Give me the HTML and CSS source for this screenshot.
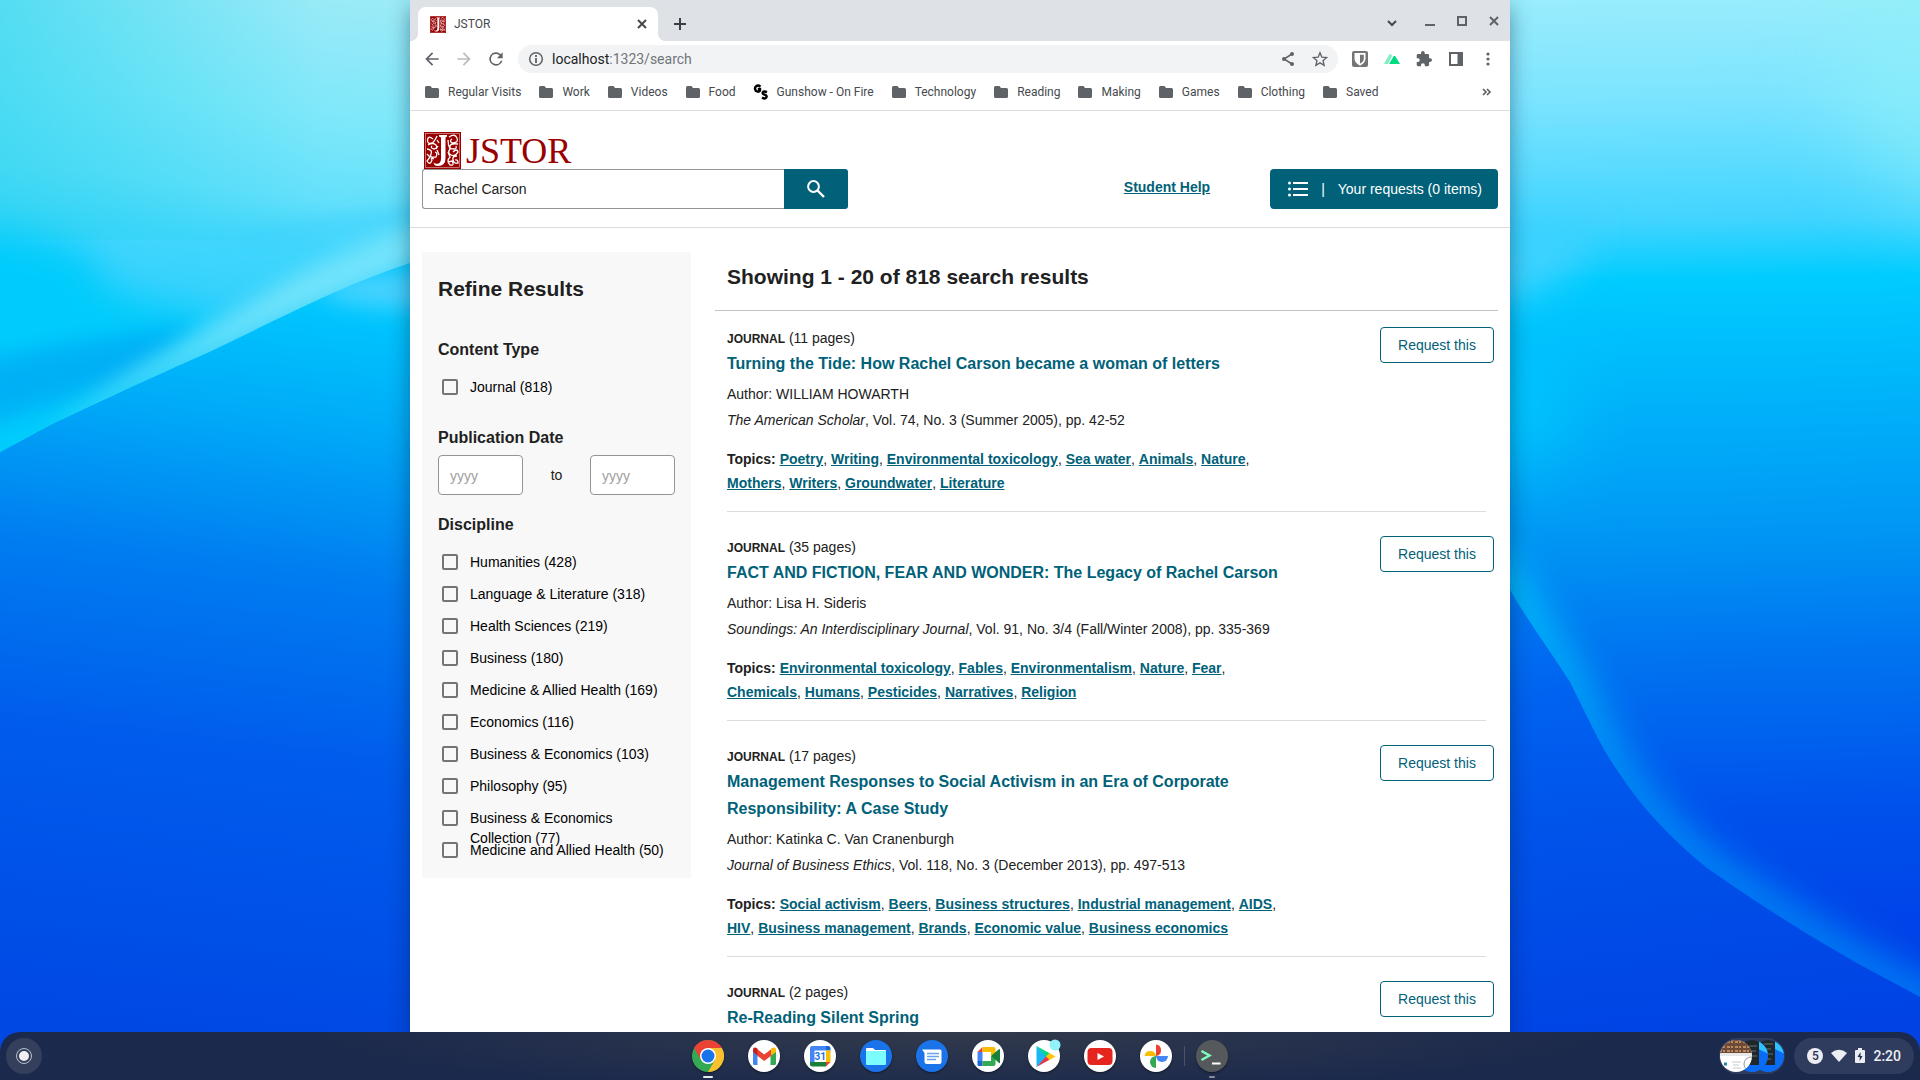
FILE: index.html
```html
<!DOCTYPE html>
<html lang="en">
<head>
<meta charset="utf-8">
<title>JSTOR</title>
<link rel="stylesheet" href="styles.css">
</head>
<body>
<svg class="wallpaper" viewBox="0 0 1920 1080" preserveAspectRatio="none" aria-hidden="true">
  <defs>
    <linearGradient id="skyL" gradientUnits="userSpaceOnUse" x1="330" y1="0" x2="290" y2="330"><stop offset="0" stop-color="#9aeaf7"/><stop offset=".35" stop-color="#7ee8fa"/><stop offset=".6" stop-color="#64e0fb"/><stop offset=".75" stop-color="#42d6fd"/><stop offset="1" stop-color="#30d0fc"/></linearGradient>
    <linearGradient id="leftTint" gradientUnits="userSpaceOnUse" x1="0" y1="0" x2="320" y2="0"><stop offset="0" stop-color="#2cd4ee" stop-opacity=".6"/><stop offset="1" stop-color="#2cd4ee" stop-opacity="0"/></linearGradient>
    <linearGradient id="deepL" gradientUnits="userSpaceOnUse" x1="330" y1="290" x2="240" y2="1040"><stop offset="0" stop-color="#00caff"/><stop offset=".17" stop-color="#00acf8"/><stop offset=".38" stop-color="#007cf0"/><stop offset=".62" stop-color="#005cec"/><stop offset="1" stop-color="#0048e4"/></linearGradient>
    <linearGradient id="skyR" gradientUnits="userSpaceOnUse" x1="1700" y1="0" x2="1720" y2="960"><stop offset="0" stop-color="#98ecfb"/><stop offset=".1" stop-color="#7ce4ff"/><stop offset=".23" stop-color="#40d4ff"/><stop offset=".29" stop-color="#00ccff"/><stop offset=".4" stop-color="#00b6fb"/><stop offset=".55" stop-color="#0098f4"/><stop offset=".68" stop-color="#0074f0"/><stop offset=".85" stop-color="#0050ec"/><stop offset="1" stop-color="#0040e8"/></linearGradient>
    <linearGradient id="deepR" gradientUnits="userSpaceOnUse" x1="1510" y1="580" x2="1560" y2="1060"><stop offset="0" stop-color="#007cf2"/><stop offset=".25" stop-color="#0062f0"/><stop offset=".5" stop-color="#0054ea"/><stop offset="1" stop-color="#0042e4"/></linearGradient>
    <linearGradient id="glow" gradientUnits="userSpaceOnUse" x1="1510" y1="560" x2="1920" y2="1000"><stop offset="0" stop-color="#00c8fc"/><stop offset=".4" stop-color="#0094f6"/><stop offset="1" stop-color="#0080f6"/></linearGradient>
    <filter id="b10" x="-20%" y="-60%" width="140%" height="220%"><feGaussianBlur stdDeviation="11"/></filter>
    <filter id="b16" x="-30%" y="-60%" width="160%" height="220%"><feGaussianBlur stdDeviation="18"/></filter>
    <filter id="b40" x="-60%" y="-60%" width="220%" height="220%"><feGaussianBlur stdDeviation="40"/></filter>
    <clipPath id="ridge"><path d="M0 0H960V142L410 263C340 286 283 317 207 353C150 378 90 406 50 425L0 452Z"/></clipPath>
    <clipPath id="hill"><path d="M960 0H1920V997L1853 961C1800 930 1760 905 1707 868C1670 838 1640 806 1617 770C1600 745 1590 722 1570 682C1550 650 1530 624 1510 590L1480 550H960Z"/></clipPath>
  </defs>
  <rect width="960" height="1080" fill="url(#deepL)"/>
  <ellipse cx="420" cy="290" rx="100" ry="18" fill="#48d2ff" filter="url(#b10)"/>
  <g clip-path="url(#ridge)">
    <rect width="960" height="460" fill="url(#skyL)"/>
    <rect width="960" height="240" fill="url(#leftTint)"/>
    <path d="M-80 222Q60 232 95 260Q85 300 220 316L160 400L-80 540Z" fill="#00ccfc" filter="url(#b16)"/>
    <path d="M-60 370Q90 335 200 326L130 380L-60 440Z" fill="#00b0f6" filter="url(#b10)"/>
    <path d="M230 236Q350 222 500 192V214Q360 226 250 246Z" fill="#38d0fc" filter="url(#b10)"/>
    <path d="M40 440L133 387L283 317L410 263L480 240V214Q340 240 240 312L130 374Z" fill="#84e8fa" opacity=".8" filter="url(#b10)"/>
  </g>
  <rect x="960" width="960" height="1080" fill="url(#deepR)"/>
  <g clip-path="url(#hill)">
    <rect x="960" width="960" height="1080" fill="url(#skyR)"/>
    <path d="M1430 220H1600Q1580 300 1430 320Z" fill="#3cd2ff" filter="url(#b16)"/>
    <path d="M1840 -60H2060V230Q1900 220 1840 120Z" fill="#90f0f8" opacity=".6" filter="url(#b40)"/>
    <path d="M1450 350H1560V460H1450Z" fill="#00c8fe" filter="url(#b40)"/>
    <path d="M1480 550L1510 590C1530 624 1550 650 1570 682C1590 722 1600 745 1617 770C1640 806 1670 838 1707 868C1760 905 1800 930 1853 961L1960 1018" fill="none" stroke="url(#glow)" stroke-width="34" filter="url(#b16)"/>
  </g>
</svg>

<div class="desktop">
<div class="window">
  <div class="tabstrip">
    <div class="tab">
      <svg width="16" height="17" viewBox="0 0 37 37" preserveAspectRatio="none"><use href="#emblem"/></svg>
      <span class="tab-title">JSTOR</span>
      <button class="icon" aria-label="Close tab"><svg width="16" height="16" viewBox="0 0 16 16"><path d="M4 4L12 12M12 4L4 12" stroke="#45494d" stroke-width="2"/></svg></button>
    </div>
    <button class="icon newtab" aria-label="New tab"><svg width="16" height="16" viewBox="0 0 16 16"><path d="M8 2V14M2 8H14" stroke="#3c4043" stroke-width="2"/></svg></button>
    <div class="wincontrols">
      <button class="icon" aria-label="Search tabs"><svg width="16" height="16" viewBox="0 0 16 16"><path d="M4 8L8 12L12 8" fill="none" stroke="#45494d" stroke-width="2"/></svg></button>
      <button class="icon" aria-label="Minimize"><svg width="16" height="16" viewBox="0 0 16 16"><path d="M3 12H13" stroke="#5f6368" stroke-width="2"/></svg></button>
      <button class="icon" aria-label="Maximize"><svg width="16" height="16" viewBox="0 0 16 16"><path d="M4 4H12V12H4Z" fill="none" stroke="#5f6368" stroke-width="2"/></svg></button>
      <button class="icon" aria-label="Close"><svg width="16" height="16" viewBox="0 0 16 16"><path d="M4 4L12 12M12 4L4 12" stroke="#5f6368" stroke-width="2"/></svg></button>
    </div>
  </div>

  <div class="toolbar">
    <button class="icon" aria-label="Back"><svg width="20" height="20" viewBox="0 0 24 24"><path d="M20 11H7.800l5.600-5.600L12 4l-8 8 8 8 1.400-1.400L7.800 13H20z" fill="#5f6368"/></svg></button>
    <button class="icon" aria-label="Forward"><svg width="20" height="20" viewBox="0 0 24 24"><path d="M4 11h12.200l-5.600-5.600L12 4l8 8-8 8-1.400-1.400L16.200 13H4z" fill="#babcbe"/></svg></button>
    <button class="icon" aria-label="Reload"><svg width="20" height="20" viewBox="0 0 24 24"><path d="M17.650 6.350A8 8 0 1 0 19.730 14h-2.080A6 6 0 1 1 12 6c1.660 0 3.140.690 4.220 1.780L13 11h7V4z" fill="#5f6368"/></svg></button>
    <div class="omnibox">
      <svg width="16" height="16" viewBox="0 0 16 16"><circle cx="8" cy="8" r="6.300" fill="none" stroke="#5f6368" stroke-width="1.500"/><path d="M8 7V12M8 4V6" stroke="#5f6368" stroke-width="1.800"/></svg>
      <span class="url">localhost<span>:1323/search</span></span>
      <svg width="16" height="16" viewBox="0 0 16 16"><path d="M12 3L4 8L12 13" fill="none" stroke="#5f6368" stroke-width="1.500"/><g fill="#5f6368"><circle cx="12" cy="3" r="2"/><circle cx="4" cy="8" r="2"/><circle cx="12" cy="13" r="2"/></g></svg>
      <svg width="16" height="16" viewBox="0 0 24 24"><path d="M12 2.500l2.800 6.700 7.200.600-5.500 4.700 1.700 7L12 17.800 5.800 21.500l1.700-7L2 9.800l7.200-.600z" fill="none" stroke="#5f6368" stroke-width="2"/></svg>
    </div>
    <div class="extensions">
      <svg width="16" height="16" viewBox="0 0 16 16"><rect width="16" height="16" rx="2" fill="#757575"/><path d="M2.500 2H13.500V8Q13 12 8 14.800Q3 12 2.500 8Z" fill="#fff"/><path d="M8 3.800H11.800V8Q11.800 10.500 8 12.700Z" fill="#757575"/></svg>
      <svg width="16" height="16" viewBox="0 0 16 16"><path d="M0 13L5 4Q6.500 2 7.500 4L8 5L4 13Z" fill="#80eec0"/><path d="M5 13L9.500 5.500Q10.500 4 11.500 5.500L16 13Z" fill="#00dc82"/></svg>
      <svg width="16" height="16" viewBox="1 1 22 22"><path d="M20.500 11H19V7a2 2 0 0 0-2-2h-4V3.500a2.500 2.500 0 0 0-5 0V5H4a2 2 0 0 0-2 2v3.800h1.500a2.700 2.700 0 0 1 0 5.400H2V20a2 2 0 0 0 2 2h3.800v-1.500a2.700 2.700 0 0 1 5.400 0V22H17a2 2 0 0 0 2-2v-4h1.500a2.500 2.500 0 0 0 0-5z" fill="#5f6368"/></svg>
      <svg width="16" height="16" viewBox="0 0 16 16"><path d="M1 1H15V15H1Z" fill="#5f6368"/><path d="M3 3H9.500V13H3Z" fill="#fff"/></svg>
      <svg width="16" height="16" viewBox="0 0 16 16"><g fill="#5f6368"><circle cx="8" cy="3" r="1.600"/><circle cx="8" cy="8" r="1.600"/><circle cx="8" cy="13" r="1.600"/></g></svg>
    </div>
  </div>

  <nav class="bookmarks">
    <a href="#"><svg><use href="#folder"/></svg>Regular Visits</a>
    <a href="#"><svg><use href="#folder"/></svg>Work</a>
    <a href="#"><svg><use href="#folder"/></svg>Videos</a>
    <a href="#"><svg><use href="#folder"/></svg>Food</a>
    <a href="#"><svg viewBox="0 0 16 16"><path d="M7.500 2.600Q5 .6 3 2.400T3 7Q5.500 8.400 7 6.800V5H4.800M14 8.200Q10.500 6.600 9.800 8.400T12.500 11Q14.600 12.400 13 13.800T9 13.600" fill="none" stroke="#000" stroke-width="2.400"/></svg>Gunshow - On Fire</a>
    <a href="#"><svg><use href="#folder"/></svg>Technology</a>
    <a href="#"><svg><use href="#folder"/></svg>Reading</a>
    <a href="#"><svg><use href="#folder"/></svg>Making</a>
    <a href="#"><svg><use href="#folder"/></svg>Games</a>
    <a href="#"><svg><use href="#folder"/></svg>Clothing</a>
    <a href="#"><svg><use href="#folder"/></svg>Saved</a>
    <button class="icon more" aria-label="More bookmarks"><svg viewBox="0 0 16 16"><path d="M4 5L7 8L4 11M8 5L11 8L8 11" fill="none" stroke="#5f6368" stroke-width="1.700"/></svg></button>
  </nav>

  <div class="page">
    <header class="site-header">
      <a class="logo" href="#">
        <svg width="37" height="37" viewBox="0 0 37 37">
          <defs><g id="emblem"><rect width="37" height="37" fill="#900"/><rect x="1.500" y="1.500" width="34" height="34" fill="none" stroke="#e6bcbc" stroke-width=".6"/><path d="M15 3H23V4.500L21.500 5.500V26Q21.500 34 14 34Q10 34 9.500 30.500Q12 32.500 14.500 31.500Q17 30.500 17 26V5.500L15 4.500Z" fill="#fff"/><g fill="none" stroke="#fff" stroke-width="1.300"><path d="M9 7Q4 3 3.500 8T9 10.500Q12 7 13 4M4 13Q9 10 12 13Q14 16 10 17Q6 16 8 14M3 17Q9 18 7 22T12 25Q14 21 11 20M3 22L6 25L3 29Q6 34 8 28Q6 25 10 27M13 8L15 11M14 14L12 17M13 18L15 23"/><path d="M25 5Q31 1 33 6T28 11Q25 9 28 7M34 12Q27 11 26 14T30 17Q33 17 32 14M24 8Q24 13 26 17Q23 21 27 23T34 20Q33 16 29 20M33 24Q28 24 29 28T34 31Q34 27 31 28M24 20L26 25Q22 29 26 33Q31 34 28 29L24 30"/></g></g></defs>
          <use href="#emblem"/>
        </svg>
        <span>JSTOR</span>
      </a>
      <div class="header-row">
        <form class="search">
          <input type="text" value="Rachel Carson" aria-label="Search">
          <button type="button" aria-label="Search"><svg width="24" height="24" viewBox="0 0 24 24"><circle cx="9.500" cy="9.500" r="5.400" fill="none" stroke="#fff" stroke-width="2"/><path d="M13.500 13.500L20 20" stroke="#fff" stroke-width="2.400"/></svg></button>
        </form>
        <a class="help" href="#">Student Help</a>
        <button class="requests"><svg width="20" height="16" viewBox="0 0 20 16"><path d="M5 2H20M5 8H20M5 14H20" stroke="#fff" stroke-width="2"/><g fill="#fff"><circle cx="1.500" cy="2" r="1.500"/><circle cx="1.500" cy="8" r="1.500"/><circle cx="1.500" cy="14" r="1.500"/></g></svg><span>|</span><span>Your requests (0 items)</span></button>
      </div>
    </header>

    <div class="columns">
      <aside class="refine">
        <h2>Refine Results</h2>
        <h3>Content Type</h3>
        <ul class="checks">
          <li><label><input type="checkbox">Journal (818)</label></li>
        </ul>
        <h3 class="date-title">Publication Date</h3>
        <div class="dates"><input type="text" placeholder="yyyy" aria-label="From year"><span>to</span><input type="text" placeholder="yyyy" aria-label="To year"></div>
        <h3>Discipline</h3>
        <ul class="checks">
          <li><label><input type="checkbox">Humanities (428)</label></li>
          <li><label><input type="checkbox">Language &amp; Literature (318)</label></li>
          <li><label><input type="checkbox">Health Sciences (219)</label></li>
          <li><label><input type="checkbox">Business (180)</label></li>
          <li><label><input type="checkbox">Medicine &amp; Allied Health (169)</label></li>
          <li><label><input type="checkbox">Economics (116)</label></li>
          <li><label><input type="checkbox">Business &amp; Economics (103)</label></li>
          <li><label><input type="checkbox">Philosophy (95)</label></li>
          <li><label><input type="checkbox">Business &amp; Economics Collection (77)</label></li>
          <li><label><input type="checkbox">Medicine and Allied Health (50)</label></li>
        </ul>
      </aside>

      <main class="results">
        <h1>Showing 1 - 20 of 818 search results</h1>
        <article class="result">
          <div class="info">
            <p class="kind"><b>JOURNAL</b> (11 pages)</p>
            <h2><a href="#">Turning the Tide: How Rachel Carson became a woman of letters</a></h2>
            <p>Author: WILLIAM HOWARTH</p>
            <p><i>The American Scholar</i>, Vol. 74, No. 3 (Summer 2005), pp. 42-52</p>
            <p class="topics"><b>Topics:</b> <a href="#">Poetry</a>, <a href="#">Writing</a>, <a href="#">Environmental toxicology</a>, <a href="#">Sea water</a>, <a href="#">Animals</a>, <a href="#">Nature</a>, <a href="#">Mothers</a>, <a href="#">Writers</a>, <a href="#">Groundwater</a>, <a href="#">Literature</a></p>
          </div>
          <button class="request">Request this</button>
        </article>
        <article class="result">
          <div class="info">
            <p class="kind"><b>JOURNAL</b> (35 pages)</p>
            <h2><a href="#">FACT AND FICTION, FEAR AND WONDER: The Legacy of Rachel Carson</a></h2>
            <p>Author: Lisa H. Sideris</p>
            <p><i>Soundings: An Interdisciplinary Journal</i>, Vol. 91, No. 3/4 (Fall/Winter 2008), pp. 335-369</p>
            <p class="topics"><b>Topics:</b> <a href="#">Environmental toxicology</a>, <a href="#">Fables</a>, <a href="#">Environmentalism</a>, <a href="#">Nature</a>, <a href="#">Fear</a>, <a href="#">Chemicals</a>, <a href="#">Humans</a>, <a href="#">Pesticides</a>, <a href="#">Narratives</a>, <a href="#">Religion</a></p>
          </div>
          <button class="request">Request this</button>
        </article>
        <article class="result">
          <div class="info">
            <p class="kind"><b>JOURNAL</b> (17 pages)</p>
            <h2><a href="#">Management Responses to Social Activism in an Era of Corporate Responsibility: A Case Study</a></h2>
            <p>Author: Katinka C. Van Cranenburgh</p>
            <p><i>Journal of Business Ethics</i>, Vol. 118, No. 3 (December 2013), pp. 497-513</p>
            <p class="topics"><b>Topics:</b> <a href="#">Social activism</a>, <a href="#">Beers</a>, <a href="#">Business structures</a>, <a href="#">Industrial management</a>, <a href="#">AIDS</a>, <a href="#">HIV</a>, <a href="#">Business management</a>, <a href="#">Brands</a>, <a href="#">Economic value</a>, <a href="#">Business economics</a></p>
          </div>
          <button class="request">Request this</button>
        </article>
        <article class="result">
          <div class="info">
            <p class="kind"><b>JOURNAL</b> (2 pages)</p>
            <h2><a href="#">Re-Reading Silent Spring</a></h2>
          </div>
          <button class="request">Request this</button>
        </article>
      </main>
    </div>
  </div>
</div>
</div>

<footer class="shelf">
  <button class="launcher" aria-label="Launcher"><svg width="36" height="36" viewBox="0 0 36 36"><circle cx="18" cy="18" r="7.500" fill="none" stroke="#b9bfd0" stroke-width="1"/><circle cx="18" cy="18" r="5" fill="#f1f1f4"/></svg></button>
  <div class="apps">
    <button class="app on" aria-label="Chrome"><svg viewBox="0 0 32 32"><circle cx="16" cy="16" r="16" fill="#34a853"/><path d="M2.140 8A16 16 0 0 1 29.860 8H16L9 20Z" fill="#ea4335"/><path d="M29.860 8A16 16 0 0 1 16 32L23 20L16 8Z" fill="#fbc02d"/><circle cx="16" cy="16" r="8" fill="#fff"/><circle cx="16" cy="16" r="6.500" fill="#1a73e8"/></svg></button>
    <button class="app" aria-label="Gmail"><svg viewBox="0 0 32 32"><circle cx="16" cy="16" r="16" fill="#fff"/><path d="M5 11H9.500V25H6.500Q5 25 5 23.500Z" fill="#4285f4"/><path d="M22.500 11H28V23.500Q28 25 26.500 25H22.500Z" fill="#34a853"/><path d="M9 9L16.200 14.500L23.500 9V15.500L16.200 21L9 15.500Z" fill="#ea4335"/><path d="M5 12V10Q5 6 9.500 8.500V15.500Z" fill="#c5221f"/><path d="M28 12V10Q28 6 23 8.500V15.500Z" fill="#fbbc04"/></svg></button>
    <button class="app" aria-label="Calendar"><svg viewBox="0 0 32 32"><circle cx="16" cy="16" r="16" fill="#fff"/><path d="M6 8Q6 6 8 6H22V10.500H10.500V22H6Z" fill="#4285f4"/><path d="M22 6H24Q26.500 6 26.500 8V10.500H22Z" fill="#1967d2"/><path d="M22 10.500H26.500V22H22Z" fill="#fbbc04"/><path d="M6 22H22V26.500H8Q6 26.500 6 24.500Z" fill="#188038"/><path d="M22 22H26.500L22 26.500Z" fill="#ea4335"/><text x="16.200" y="19.500" text-anchor="middle" class="cal-day">31</text></svg></button>
    <button class="app" aria-label="Files"><svg viewBox="0 0 32 32"><circle cx="16" cy="16" r="16" fill="#1a73e8"/><path d="M6 9Q6 8 7 8H13L15 10H25Q26 10 26 11V14H6Z" fill="#fff"/><path d="M6 11H26V24Q26 25 25 25H7Q6 25 6 24Z" fill="#7dfcff"/></svg></button>
    <button class="app" aria-label="Messages"><svg viewBox="0 0 32 32"><circle cx="16" cy="16" r="16" fill="#1a73e8"/><path d="M6 9.500H24Q25.500 9.500 25.500 11V22Q25.500 24 23.500 24H11Q8.500 24 8.500 22V13Z" fill="#fff"/><path d="M11 13.500H23M11 16.500H23M11 19.500H20" stroke="#6ba2ee" stroke-width="1.300"/></svg></button>
    <button class="app" aria-label="Meet"><svg viewBox="0 0 32 32"><circle cx="16" cy="16" r="16" fill="#fff"/><path d="M5.500 12L10.500 7V12Z" fill="#ea4335"/><path d="M5.500 12H10.500V21H5.500Z" fill="#4285f4"/><path d="M5.500 21H10.500V26H7Q5.500 26 5.500 24.500Z" fill="#1967d2"/><path d="M10.500 7H21.500Q23.500 7 23.500 9V14L19 16V12H10.500Z" fill="#fbbc04"/><path d="M10.500 26V21H19V16L23.500 18V24Q23.500 26 21.500 26Z" fill="#34a853"/><path d="M19 16L26.500 9.500Q28 8.500 28 10V22.500Q28 24 26.500 22.500Z" fill="#188038"/></svg></button>
    <button class="app" aria-label="Play Store"><svg viewBox="0 0 32 32"><circle cx="16" cy="16" r="16" fill="#fff"/><path d="M8.500 6V27L19 16.500Z" fill="#19b8f5"/><path d="M8.500 6L22 13.500L18.500 17Z" fill="#00d97e"/><path d="M8.500 27L22 19.500L18.500 16Z" fill="#e5344c"/><path d="M21.500 13L27.500 16.500L21.500 20L18 16.500Z" fill="#ffc40c"/><circle cx="27" cy="5" r="5.500" fill="#92f2f7"/></svg></button>
    <button class="app" aria-label="YouTube"><svg viewBox="0 0 32 32"><circle cx="16" cy="16" r="16" fill="#fff"/><rect x="3.500" y="8" width="25" height="17" rx="4" fill="#e6251f"/><path d="M13.500 13V20L20 16.500Z" fill="#fff"/></svg></button>
    <button class="app" aria-label="Photos"><svg viewBox="0 0 32 32"><circle cx="16" cy="16" r="16" fill="#fff"/><path d="M16 16V4.500A5.800 5.800 0 0 1 16 16Z" fill="#ea4335"/><path d="M16 16H28A6 6 0 0 1 16 16Z" fill="#4285f4"/><path d="M16 16V28A6 6 0 0 1 16 16Z" fill="#34a853"/><path d="M16 16H4.500A5.800 5.800 0 0 1 16 16Z" fill="#fbbc04"/></svg></button>
    <i class="divider"></i>
    <button class="app idle" aria-label="Terminal"><svg viewBox="0 0 32 32"><circle cx="16" cy="16" r="16" fill="#55595c"/><path d="M5.500 11L13.500 15.500L5.500 20" fill="none" stroke="#7dfcc0" stroke-width="2.400"/><path d="M16 23.500H24.500" stroke="#fff" stroke-width="2"/></svg></button>
  </div>
  <div class="status">
    <button class="holding" aria-label="Recent screen captures"><svg width="66" height="36" viewBox="0 0 66 36"><defs><clipPath id="c1"><circle cx="17" cy="18" r="16"/></clipPath><clipPath id="c2"><circle cx="33" cy="18" r="16"/></clipPath><clipPath id="c3"><circle cx="49" cy="18" r="16"/></clipPath></defs><rect width="66" height="36" rx="18" fill="#2f3c5e"/>
      <g clip-path="url(#c3)"><path d="M33 2H66V34H33Z" fill="#0a6cf5"/><path d="M56 2H66V16L56 11Z" fill="#30c0ff"/><path d="M33 2H56V27H33Z" fill="#202729"/><path d="M45 6H54M45 11H52M45 16H54M45 21H52" stroke="#657074"/></g>
      <g clip-path="url(#c2)"><path d="M17 2H50V34H17Z" fill="#0a6cf5"/><path d="M39 2H50V16L39 11Z" fill="#30c0ff"/><path d="M17 2H40V27H17Z" fill="#202729"/><path d="M30 8H38M30 13H37M30 18H38" stroke="#657074"/></g>
      <g clip-path="url(#c1)"><path d="M0 0H34V36H0Z" fill="#fff"/><path d="M0 0H34V16H0Z" fill="#6d4a36"/><path d="M0 4H34M0 9H34M0 13H34" stroke="#b98a62" stroke-width="2" stroke-dasharray="3 1 2 2"/><path d="M0 15H34V18H0Z" fill="#e8e8e8"/><path d="M5 26H8" stroke="#2088a8" stroke-width="3"/><path d="M13 24H22M14 27H20M14 30H22" stroke="#c5c8cc"/><circle cx="32" cy="26" r="7" fill="none" stroke="#8e959c"/></g></svg></button>
    <button class="tray"><span class="count">5</span>
      <svg width="16" height="16" viewBox="0 0 16 16"><path d="M0 5Q8-1.500 16 5L8 14Z" fill="#eceef3"/></svg>
      <svg width="10" height="16" viewBox="0 0 10 16"><path d="M3 0H7V2H9Q10 2 10 3V14Q10 15 9 15H1Q0 15 0 14V3Q0 2 1 2H3Z" fill="#eceef3"/><path d="M5.500 4L2.500 9H4.700V13L7.500 8H5.500Z" fill="#24304f"/></svg>
      <time>2:20</time></button>
  </div>
</footer>
<svg class="defs" aria-hidden="true"><symbol id="folder" viewBox="0 0 16 16"><path d="M1 3.500Q1 2 2.500 2H6.500L8 4H13.500Q15 4 15 5.500V12.500Q15 14 13.500 14H2.500Q1 14 1 12.500Z" fill="#5f6368"/></symbol></svg>
</body>
</html>
```
FILE: styles.css
```css
* { box-sizing: border-box; }
body {
  margin: 0;
  height: 100vh;
  overflow: hidden;
  display: flex;
  flex-direction: column;
  background: #0050ea;
  font-family: "Liberation Sans", Arial, sans-serif;
  font-size: 14px;
  color: #212121;
}
h1, h2, h3, p, ul { margin: 0; padding: 0; }
ul { list-style: none; }
a { color: inherit; }
button { font: inherit; padding: 0; border: 0; background: none; color: inherit; cursor: pointer; }
svg { display: block; flex: none; }

.defs { position: absolute; width: 0; height: 0; }
.wallpaper { position: absolute; inset: 0; width: 100%; height: 100%; z-index: -1; }

/* Browser window */
.desktop { flex: 1; min-height: 0; display: flex; justify-content: center; }
.window {
  width: 100%;
  max-width: 1100px;
  background: #fff;
  overflow: hidden;
  box-shadow: 0 8px 20px rgba(0, 30, 60, .45);
  display: flex;
  flex-direction: column;
}
.tabstrip, .toolbar, .bookmarks { flex: none; font-family: Roboto, sans-serif; }
.tabstrip { height: 41px; padding: 0 8px; display: flex; background: #dee1e6; }
.tab {
  position: relative;
  width: 240px;
  margin-top: 7px;
  padding: 0 8px 0 12px;
  display: flex;
  align-items: center;
  gap: 8px;
  background: #fff;
  border-radius: 8px 8px 0 0;
  font-size: 12px;
  color: #45494d;
}
.tab::before, .tab::after { content: ""; position: absolute; bottom: 0; width: 8px; height: 8px; }
.tab::before { left: -8px; background: radial-gradient(circle at 0 0, #dee1e6 8px, #fff 8px); }
.tab::after { right: -8px; background: radial-gradient(circle at 100% 0, #dee1e6 8px, #fff 8px); }
.tab-title { flex: 1; }
.newtab { margin: 7px 0 0 14px; }
.icon { display: flex; align-items: center; justify-content: center; }
.wincontrols { margin-left: auto; display: flex; gap: 16px; align-items: center; }
.wincontrols .icon:first-child { margin-right: 6px; }

.toolbar { height: 36px; padding: 0 14px 0 12px; display: flex; align-items: center; gap: 12px; }
.omnibox {
  flex: 1;
  height: 28px;
  padding: 0 10px;
  display: flex;
  align-items: center;
  gap: 16px;
  background: #f1f3f4;
  border-radius: 14px;
}
.omnibox .url { flex: 1; font-size: 14px; color: #202124; }
.omnibox > svg:first-child { margin-right: -8px; }
.url span { color: #70757a; }
.extensions { display: flex; gap: 16px; margin-left: 2px; }

.bookmarks {
  height: 34px;
  padding: 0 15px 3px 14px;
  display: flex;
  align-items: center;
  gap: 17px;
  border-bottom: 1px solid #dcdcdc;
  font-size: 12px;
}
.bookmarks a { display: flex; align-items: center; gap: 8px; color: #45494d; text-decoration: none; white-space: nowrap; }
.bookmarks svg { width: 16px; height: 16px; }
.bookmarks .more { margin-left: auto; }

/* Search page */
.page { flex: 1; min-height: 0; overflow: hidden; }
.site-header { height: 117px; padding: 21px 12px 0; border-bottom: 1px solid #dcdcdc; }
.logo { display: flex; align-items: center; gap: 5px; height: 37px; padding-left: 2px; text-decoration: none; color: #900; font: 36px/36px "Liberation Serif", serif; }
.header-row { display: flex; align-items: center; }
.search { display: flex; width: 426px; }
.search input {
  flex: 1;
  min-width: 0;
  height: 40px;
  padding: 0 11px;
  border: 1px solid #949494;
  border-right: 0;
  border-radius: 3px 0 0 3px;
  font: inherit;
  color: inherit;
}
.search button { width: 64px; display: flex; align-items: center; justify-content: center; background: #006179; border-radius: 0 3px 3px 0; }
.help { margin: 0 60px 4px auto; font-weight: bold; color: #006179; }
.requests { height: 40px; padding: 0 16px 0 18px; display: flex; align-items: center; gap: 13px; background: #006179; color: #fff; border-radius: 4px; }

.columns { display: grid; grid-template-columns: 269px 1fr; gap: 24px; align-items: start; padding: 24px 12px; }
.refine { padding: 0 16px 12px; background: #f8f8f8; }
.refine h2 { padding: 24px 0 36px; font-size: 21px; line-height: 26px; }
.refine h3 { font-size: 16px; line-height: 24px; margin-bottom: 9px; }
.checks li { height: 32px; padding-top: 6px; }
.checks label { display: flex; align-items: flex-start; gap: 12px; line-height: 20px; color: #000; }
.checks input { appearance: none; flex: none; width: 16px; height: 16px; margin: 2px 0 0 4px; border: 2px solid #757575; border-radius: 2px; }
.refine .date-title { margin: 23px 0 5px; }
.dates { display: flex; align-items: center; justify-content: space-between; margin-bottom: 18px; }
.dates input { width: 85px; height: 40px; padding: 2px 11px 0; border: 1px solid #949494; border-radius: 4px; background: #fff; font: inherit; }
.dates input::placeholder { color: #a0a0a0; }

.results h1 { padding: 12px 12px 20px; border-bottom: 1px solid #c4c4c4; font-size: 21px; line-height: 26px; }
.result { margin: 0 12px; padding: 24px 0 16px; display: flex; justify-content: space-between; align-items: flex-start; border-bottom: 1px solid #dcdcdc; }
.results h1 + .result { padding-top: 16px; }
.info { width: 576px; line-height: 26px; }
.info .kind { line-height: 22px; }
.kind b { font-size: 12px; }
.info h2 { margin-bottom: 4px; font-size: 16px; line-height: 27px; color: #006179; }
.info h2 a { text-decoration: none; }
.info .topics { margin-top: 14px; line-height: 24px; }
.topics a { font-weight: bold; color: #006179; }
.request { width: 114px; height: 36px; margin-right: -8px; border: 1px solid #006179; border-radius: 4px; color: #006179; }

/* Shelf */
.shelf {
  flex: none;
  height: 48px;
  padding: 0 6px;
  display: grid;
  grid-template-columns: 1fr auto 1fr;
  align-items: center;
  background: radial-gradient(ellipse 650px 60px at 50% 0, #323a4b, #1b294c);
  border-radius: 20px 20px 0 0;
}
.launcher { justify-self: start; width: 36px; height: 36px; border-radius: 50%; background: #343f5c; }
.apps { display: flex; align-items: center; gap: 24px; }
.app { position: relative; width: 32px; height: 32px; border-radius: 50%; box-shadow: 0 1px 2px rgba(0, 0, 0, .5); }
.app svg { width: 32px; height: 32px; overflow: visible; }
.app.on::after, .app.idle::after { content: ""; position: absolute; left: 11px; bottom: -6px; width: 10px; height: 2px; background: #e8eaed; border-radius: 1px; }
.app.idle::after { left: 13px; width: 6px; background: #868c99; }
.cal-day { font: bold 10px Roboto, sans-serif; fill: #1a73e8; }
.divider { width: 1px; height: 20px; margin: 0 -13px 0 -12px; background: #4a5369; }
.status { justify-self: end; display: flex; gap: 9px; }
.tray { height: 36px; padding: 0 13px; display: flex; align-items: center; gap: 8px; border-radius: 18px; background: #2f3c5e; color: #eceef3; font: 500 14px Roboto, sans-serif; }
.count { width: 16px; height: 16px; border-radius: 50%; background: #eceef3; color: #24304f; font-size: 12px; line-height: 16px; text-align: center; }
```
